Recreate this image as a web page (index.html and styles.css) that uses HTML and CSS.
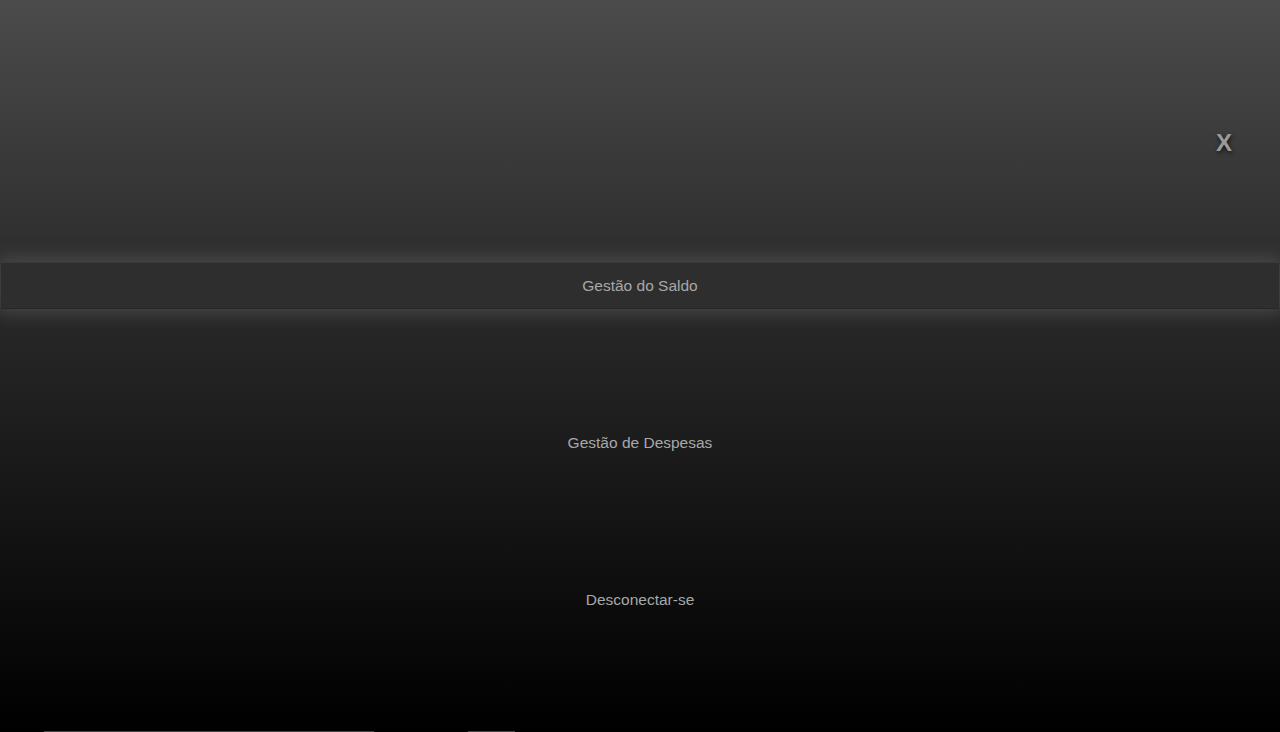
FILE: index.html
```html
<!DOCTYPE html>
<html lang="pt">
<head>
<meta charset="utf-8">
<title>Menu</title>
<link rel="stylesheet" href="styles.css">
</head>
<body>
<div class="page">
  <div class="under">
    <span class="under-bar wide"></span>
    <span class="under-bar narrow"></span>
  </div>
  <div class="overlay">
    <a class="close" href="#">X</a>
    <nav class="menu">
      <a class="item active" href="#">Gestão do Saldo</a>
      <a class="item" href="#">Gestão de Despesas</a>
      <a class="item" href="#">Desconectar-se</a>
    </nav>
  </div>
</div>
</body>
</html>
```

FILE: styles.css
```css
html, body {
  margin: 0;
  padding: 0;
  height: 100%;
  overflow: hidden;
  background: #000;
  font-family: "Liberation Sans", Arial, sans-serif;
}
.page {
  position: relative;
  width: 1280px;
  height: 732px;
}
.under {
  position: absolute;
  left: 0;
  right: 0;
  bottom: 0;
  height: 1px;
}
.under-bar {
  position: absolute;
  bottom: 0;
  height: 1px;
  background: #444;
}
.under-bar.wide { left: 44px; width: 330px; }
.under-bar.narrow { left: 468px; width: 47px; }
.overlay {
  position: absolute;
  inset: 0 0 1px 0;
  background: linear-gradient(to bottom, #4b4b4b 0%, #2a2a2a 40%, #000 100%);
}
.close {
  position: absolute;
  top: 129px;
  left: 1216px;
  font-size: 24px;
  font-weight: bold;
  color: #9a9a9a;
  text-decoration: none;
  text-shadow: 1px 2px 4px rgba(0,0,0,0.7);
}
.menu {
  display: flex;
  flex-direction: column;
  gap: 110px;
  padding-top: 262px;
}
.item {
  display: flex;
  align-items: center;
  justify-content: center;
  height: 47px;
  margin: 0 1px;
  color: #a8a8a8;
  font-size: 15.5px;
  text-decoration: none;
}
.item.active {
  background: #2e2e2e;
  box-shadow: 0 0 18px 4px rgba(110,110,110,0.45);
  border-top: 1px solid #3a3a3a;
  border-bottom: 1px solid #262626;
  height: 45px;
}
```
